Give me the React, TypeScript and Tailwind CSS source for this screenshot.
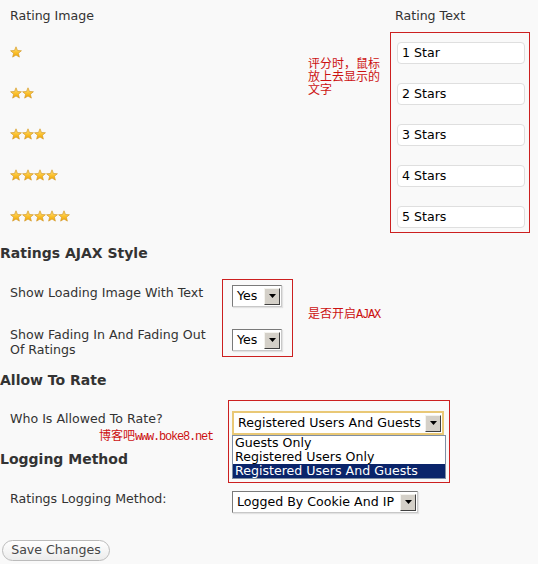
const redBox = "border border-[#cc2020]";

function Star() {
  return (
    <svg width="12" height="12" viewBox="0 0 12 12">
      <defs>
        <linearGradient id="sg" x1="0" y1="0" x2="0" y2="1">
          <stop offset="0" stopColor="#ffe680" />
          <stop offset="0.55" stopColor="#fbc02d" />
          <stop offset="1" stopColor="#eea500" />
        </linearGradient>
      </defs>
      <path
        d="M6 0.8 L7.47 4.48 L11.42 4.74 L8.38 7.27 L9.35 11.11 L6 9 L2.65 11.11 L3.62 7.27 L0.58 4.74 L4.53 4.48 Z"
        fill="url(#sg)"
        stroke="#d49a2a"
        strokeWidth="0.7"
        strokeLinejoin="round"
      />
    </svg>
  );
}

function DropButton() {
  return (
    <span className="flex h-[17px] w-[16px] items-center justify-center border border-t-[#f4f3ee] border-l-[#f4f3ee] border-r-[#404040] border-b-[#404040] bg-[#d4d0c8]">
      <svg width="7" height="4" viewBox="0 0 7 4">
        <path d="M0 0 H7 L3.5 4 Z" fill="#000" />
      </svg>
    </span>
  );
}

function Select({ value, width }: { value: string; width: string }) {
  return (
    <div
      className={`flex h-[22px] items-center justify-between border border-t-[#7a7a7a] border-l-[#7a7a7a] border-r-[#c8c8c8] border-b-[#c8c8c8] bg-white pl-[4px] pr-[1px] shadow-[1px_1px_1px_#e2e2e2] ${width}`}
    >
      <span className="whitespace-nowrap text-black">{value}</span>
      <DropButton />
    </div>
  );
}

function Heading({ children, className }: { children: string; className: string }) {
  return <h3 className={`h-[18px] text-[14px] font-bold leading-[18px] text-[#333] ${className}`}>{children}</h3>;
}

const cjk = "font-['Noto_Sans_CJK_SC',sans-serif] text-[12px] text-[#cc1111]";
const mono = "font-['Liberation_Mono',monospace] text-[12px] tracking-[-1.2px] text-[#cc1111]";

export default function App() {
  const ratingTexts = ["1 Star", "2 Stars", "3 Stars", "4 Stars", "5 Stars"];

  return (
    <div className="min-h-screen bg-[#f9f9f9] font-['DejaVu_Sans',Verdana,sans-serif] text-[12.6px] text-[#333]">
      {/* rating image / rating text */}
      <div className="flex h-[233px]">
        <div className="w-[308px] pl-[10px]">
          <p className="h-[32px] leading-[32px]">Rating Image</p>
          <div className="flex flex-col gap-[29px] pt-[14px]">
            {[1, 2, 3, 4, 5].map((n) => (
              <div key={n} className="flex h-[12px]">
                {Array.from({ length: n }).map((_, i) => (
                  <Star key={i} />
                ))}
              </div>
            ))}
          </div>
        </div>
        <div className={`w-[82px] pt-[56px] leading-[13px] ${cjk}`}>
          <p>评分时，鼠标</p>
          <p>放上去显示的</p>
          <p>文字</p>
        </div>
        <div className="w-[140px]">
          <p className="h-[32px] pl-[5px] leading-[32px]">Rating Text</p>
          <div className={`flex h-[201px] flex-col gap-[19px] pl-[6px] pt-[9px] ${redBox}`}>
            {ratingTexts.map((t) => (
              <div
                key={t}
                className="flex h-[22px] w-[128px] items-center rounded-[4px] border border-[#dfdfdf] bg-white pl-[4px] text-black"
              >
                {t}
              </div>
            ))}
          </div>
        </div>
      </div>

      <Heading className="mt-[11px]">Ratings AJAX Style</Heading>

      <div className="mt-[17px] flex">
        <div className="w-[222px] pl-[10px] pt-[6px] leading-[15px]">
          <p>Show Loading Image With Text</p>
          <p className="mt-[27px]">
            Show Fading In And Fading Out
            <br />
            Of Ratings
          </p>
        </div>
        <div className={`flex h-[78px] w-[71px] flex-col gap-[22px] pl-[9px] pt-[5px] ${redBox}`}>
          <Select value="Yes" width="w-[50px]" />
          <Select value="Yes" width="w-[50px]" />
        </div>
        <p className="ml-[15px] h-[40px] pt-[28px] leading-[12px]">
          <span className={cjk}>是否开启</span>
          <span className={mono}>AJAX</span>
        </p>
      </div>

      <Heading className="mt-[14px]">Allow To Rate</Heading>

      <div className="mt-[22px] flex">
        <div className="w-[232px] pl-[10px]">
          <p className="leading-[15px]">Who Is Allowed To Rate?</p>
          <p className="ml-[89px] mt-[3px] h-[12px] whitespace-nowrap leading-[12px]">
            <span className={cjk}>博客吧</span>
            <span className={mono}>www.boke8.net</span>
          </p>
        </div>
        <div className="relative h-[24px] w-[212px]">
          <div className={`pointer-events-none absolute left-[-4px] top-[-11px] h-[83px] w-[222px] ${redBox}`} />
          <div className="flex h-[24px] w-[212px] items-center justify-between border-2 border-[#e9c876] bg-white pl-[4px] pr-[1px]">
            <span className="whitespace-nowrap text-black">Registered Users And Guests</span>
            <DropButton />
          </div>
          <ul className="absolute left-0 top-[24px] w-[214px] border border-[#7f8ea3] bg-white leading-[14px] text-black">
            <li className="pl-[2px]">Guests Only</li>
            <li className="pl-[2px]">Registered Users Only</li>
            <li className="bg-[#0a246a] pl-[2px] text-white">Registered Users And Guests</li>
          </ul>
        </div>
      </div>

      <Heading className="mt-[9px]">Logging Method</Heading>

      <div className="mt-[23px] flex">
        <p className="w-[232px] pl-[10px] leading-[15px]">Ratings Logging Method:</p>
        <Select value="Logged By Cookie And IP" width="w-[186px]" />
      </div>

      <button className="ml-[2px] mt-[27px] flex h-[21px] w-[108px] items-center justify-center rounded-full border border-[#bbbbbb] bg-gradient-to-b from-white to-[#ececec] text-[#464646]">
        Save Changes
      </button>
    </div>
  );
}
